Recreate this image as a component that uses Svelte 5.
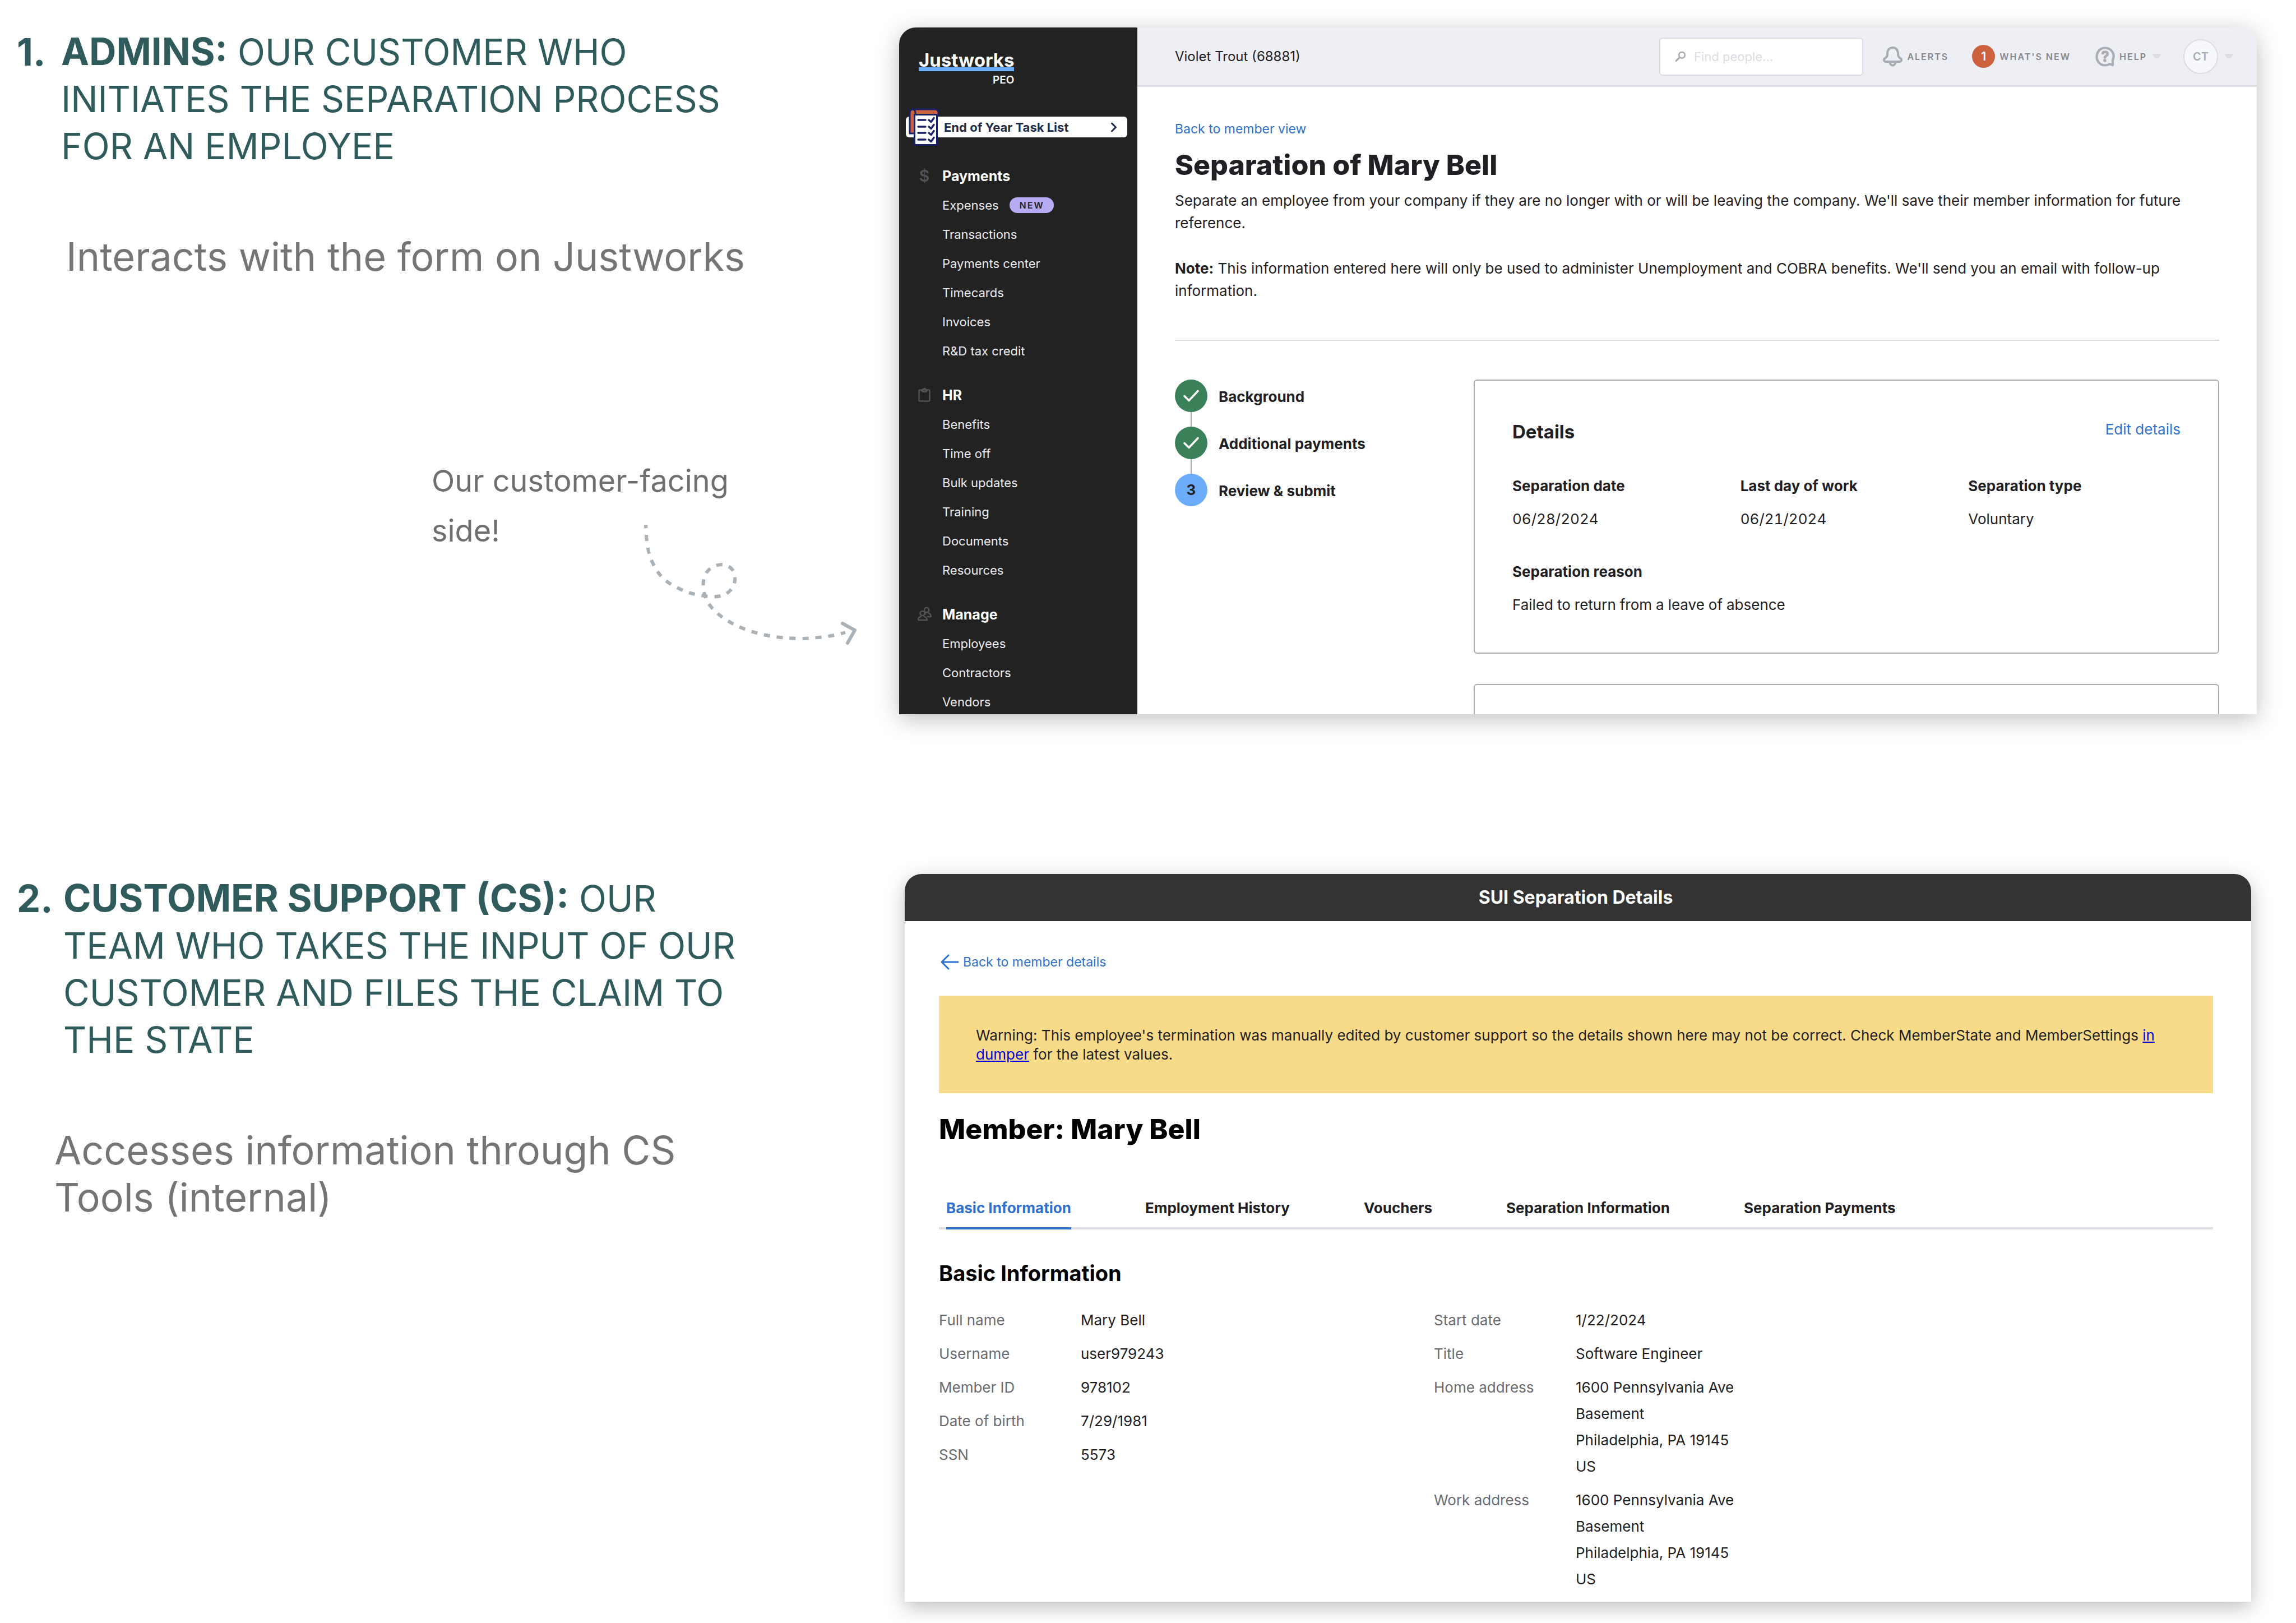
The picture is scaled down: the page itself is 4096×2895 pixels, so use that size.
<script lang="ts">
  type MenuGroup = { title: string; icon: string; items: { label: string; isNew?: boolean }[] };

  const menu: MenuGroup[] = [
    {
      title: 'Payments',
      icon: 'dollar',
      items: [
        { label: 'Expenses', isNew: true },
        { label: 'Transactions' },
        { label: 'Payments center' },
        { label: 'Timecards' },
        { label: 'Invoices' },
        { label: 'R&D tax credit' }
      ]
    },
    {
      title: 'HR',
      icon: 'clipboard',
      items: [
        { label: 'Benefits' },
        { label: 'Time off' },
        { label: 'Bulk updates' },
        { label: 'Training' },
        { label: 'Documents' },
        { label: 'Resources' }
      ]
    },
    {
      title: 'Manage',
      icon: 'people',
      items: [{ label: 'Employees' }, { label: 'Contractors' }, { label: 'Vendors' }]
    }
  ];

  const steps = [
    { label: 'Background', done: true },
    { label: 'Additional payments', done: true },
    { label: 'Review & submit', done: false }
  ];

  const details = [
    { label: 'Separation date', value: '06/28/2024' },
    { label: 'Last day of work', value: '06/21/2024' },
    { label: 'Separation type', value: 'Voluntary' },
    { label: 'Separation reason', value: 'Failed to return from a leave of absence', wide: true }
  ];

  const tabs = [
    'Basic Information',
    'Employment History',
    'Vouchers',
    'Separation Information',
    'Separation Payments'
  ];
  let activeTab = $state(0);

  const address = ['1600 Pennsylvania Ave', 'Basement', 'Philadelphia, PA 19145', 'US'];
  const facts = [
    [
      { label: 'Full name', lines: ['Mary Bell'] },
      { label: 'Username', lines: ['user979243'] },
      { label: 'Member ID', lines: ['978102'] },
      { label: 'Date of birth', lines: ['7/29/1981'] },
      { label: 'SSN', lines: ['5573'] }
    ],
    [
      { label: 'Start date', lines: ['1/22/2024'] },
      { label: 'Title', lines: ['Software Engineer'] },
      { label: 'Home address', lines: address },
      { label: 'Work address', lines: address }
    ]
  ];
</script>

<main class="slide">
  <section class="row">
    <div class="story">
      <h2 class="lead">
        <strong class="num">1.</strong>
        <span><strong>ADMINS:</strong> OUR CUSTOMER WHO INITIATES THE SEPARATION PROCESS FOR AN EMPLOYEE</span>
      </h2>
      <p class="sub first">Interacts with the form on Justworks</p>
      <figure class="callout">
        <figcaption>Our customer-facing side!</figcaption>
        <svg class="swirl" viewBox="1148 932 384 222" fill="none" stroke="#aab1b7" aria-hidden="true">
          <path
            d="M1152 936C1153 968 1156 985 1163 1001C1172 1022 1184 1036 1204 1046C1225 1058 1247 1063 1271 1064C1285 1065 1295 1061 1302 1054C1309 1047 1312 1038 1311 1028C1310 1016 1300 1007 1288 1007C1274 1007 1261 1016 1257 1028C1253 1041 1254 1052 1259 1067C1267 1086 1288 1103 1312 1115C1345 1131 1385 1139 1431 1139C1460 1138 1485 1135 1508 1128"
            stroke-width="6" stroke-dasharray="11 12" stroke-dashoffset="5" />
          <path d="M1503 1112L1525 1124L1512 1147" stroke-width="6" stroke-linecap="round" stroke-linejoin="round" />
        </svg>
      </figure>
    </div>

    <div class="stage top">
      <article class="window portal">
        <aside class="sidebar">
          <div class="logo">
            <span class="brand">Justworks</span>
            <span class="product">PEO</span>
          </div>
          <a class="task" href="#tasks">
            <svg class="task-icon" viewBox="0 0 55 67" aria-hidden="true">
              <path d="M3 45V9C3 4 5 2 8 2H48C56 2 56 14 50 14H14V45Z" fill="#cd603d" stroke="#182066" stroke-width="3" stroke-linejoin="round" />
              <path d="M7 2C13 2 14 8 13 14" fill="none" stroke="#182066" stroke-width="3" />
              <rect x="11.500" y="11.500" width="40" height="54" fill="#fff" stroke="#182066" stroke-width="3" stroke-linejoin="round" />
              <path
                d="M18 21H31M18 33H31M18 44H31M18 56H31M37 21l4 3.500 5-7M37 33l4 3.500 5-7M37 44l4 3.500 5-7M37 56l4 3.500 5-7"
                fill="none" stroke="#182066" stroke-width="3.400" stroke-linecap="round" stroke-linejoin="round" />
            </svg>
            <span>End of Year Task List</span>
            <svg class="task-go" viewBox="0 0 12 18" aria-hidden="true">
              <path d="M2.500 2L9.500 9L2.500 16" fill="none" stroke="#1e2c49" stroke-width="3" stroke-linecap="round" stroke-linejoin="round" />
            </svg>
          </a>
          <nav class="menu" aria-label="Main">
            {#each menu as group}
              <div class="group">
                <h3>
                  <span class="menu-icon">
                    {#if group.icon === 'dollar'}
                      $
                    {:else if group.icon === 'clipboard'}
                      <svg viewBox="0 0 26 26" aria-hidden="true">
                        <rect x="3.500" y="4.500" width="19" height="20" rx="2" />
                        <path d="M8 5.500C9 8.500 17 8.500 18 5.500C16 5.500 16 2 13 2S10 5.500 8 5.500Z" />
                      </svg>
                    {:else}
                      <svg viewBox="0 0 26 26" aria-hidden="true">
                        <circle cx="9.500" cy="12" r="4" />
                        <path d="M2 24C2 20 5 18 7.500 17.500M11.500 17.500C14 18 18 20 18 24H2" />
                        <circle cx="17" cy="6" r="4.200" />
                        <path d="M19.500 11C22 12 25 14 25 18H18M14 11L16 14" />
                      </svg>
                    {/if}
                  </span>
                  {group.title}
                </h3>
                <ul>
                  {#each group.items as item}
                    <li>
                      <a href="#menu">{item.label}</a>
                      {#if item.isNew}<span class="pill">NEW</span>{/if}
                    </li>
                  {/each}
                </ul>
              </div>
            {/each}
          </nav>
        </aside>

        <div class="page">
          <header class="topbar">
            <span class="who">Violet Trout (68881)</span>
            <label class="search">
              <svg viewBox="0 0 22 22" fill="none" stroke="#a9acb3" aria-hidden="true">
                <circle cx="14" cy="8" r="6" stroke-width="3" />
                <path d="M9.500 12.500L2.500 19.500" stroke-width="3.500" stroke-linecap="round" />
              </svg>
              <input type="text" placeholder="Find people..." aria-label="Find people" />
            </label>
            <button class="tool alerts">
              <svg class="bell" viewBox="0 0 35 36" fill="none" stroke="#a9acb3" stroke-width="4" aria-hidden="true">
                <path d="M17.500 2C11 2 8 7 8 12C8 17 7.500 18 4.500 20.500C0.500 22.500 1.500 27 5.500 27H29.500C33.500 27 34.500 22.500 30.500 20.500C27.500 18 27 17 27 12C27 7 24 2 17.500 2Z" />
                <path d="M12.500 28C13 35.500 22 35.500 22.500 28" />
              </svg>
              ALERTS
            </button>
            <button class="tool news"><span class="count">1</span>WHAT'S NEW</button>
            <button class="tool help">
              <svg class="bubble" viewBox="0 0 35 36" fill="none" stroke="#a9acb3" stroke-linejoin="round" stroke-linecap="round" aria-hidden="true">
                <path d="M31 24C36 14 29 2.500 17.500 2.500C8 2.500 2.500 10 2.500 18C2.500 27 9 33.500 17.500 33.500C21 33.500 23 32.500 25.500 31L31 33Z" stroke-width="4.200" />
                <text x="17.500" y="27" text-anchor="middle" fill="#a9acb3" stroke="#a9acb3" stroke-width="1">?</text>
              </svg>
              HELP
              <svg class="caret" viewBox="0 0 15 9" aria-hidden="true"><path d="M0 0H15C14 5 10 8 7.500 9C5 8 1 5 0 0Z" fill="#dcdde2" /></svg>
            </button>
            <button class="account" aria-label="Account CT">
              <span class="avatar">CT</span>
              <svg class="caret" viewBox="0 0 15 9" aria-hidden="true"><path d="M0 0H15C14 5 10 8 7.500 9C5 8 1 5 0 0Z" fill="#dcdde2" /></svg>
            </button>
          </header>

          <div class="body">
            <a class="back" href="#member">Back to member view</a>
            <h1>Separation of Mary Bell</h1>
            <p class="intro">
              Separate an employee from your company if they are no longer with or will be leaving the company.
              We'll save their member information for future reference.
            </p>
            <p class="intro note">
              <strong>Note:</strong> This information entered here will only be used to administer Unemployment and
              COBRA benefits. We'll send you an email with follow-up information.
            </p>
            <hr />
            <div class="work">
              <ol class="steps">
                {#each steps as step, i}
                  <li>
                    <span class="dot" class:done={step.done}>
                      {#if step.done}
                        <svg viewBox="0 0 28 22" aria-hidden="true">
                          <path d="M2 11.500L10 19.500L26 2.500" fill="none" stroke="#fff" stroke-width="3.600" stroke-linecap="round" stroke-linejoin="round" />
                        </svg>
                      {:else}{i + 1}{/if}
                    </span>
                    <span class="step-name">{step.label}</span>
                  </li>
                {/each}
              </ol>
              <div class="cards">
                <section class="card">
                  <div class="card-head">
                    <h2>Details</h2>
                    <a href="#edit">Edit details</a>
                  </div>
                  <dl class="detail-grid">
                    {#each details as d}
                      <div class:wide={d.wide}>
                        <dt>{d.label}</dt>
                        <dd>{d.value}</dd>
                      </div>
                    {/each}
                  </dl>
                </section>
                <section class="card"></section>
              </div>
            </div>
          </div>
        </div>
      </article>
    </div>
  </section>

  <section class="row">
    <div class="story support">
      <h2 class="lead">
        <strong class="num">2.</strong>
        <span><strong>CUSTOMER SUPPORT (CS):</strong> OUR TEAM WHO TAKES THE INPUT OF OUR CUSTOMER AND FILES THE CLAIM TO THE STATE</span>
      </h2>
      <p class="sub second">Accesses information through CS Tools (internal)</p>
    </div>

    <div class="stage bottom">
      <article class="window tools">
        <header class="titlebar">SUI Separation Details</header>
        <div class="tool-body">
          <a class="back" href="#details">
            <svg viewBox="0 0 34 28" aria-hidden="true">
              <path d="M15 2L3 14L15 26M3 14H32" fill="none" stroke="#2f70d0" stroke-width="3" stroke-linecap="round" stroke-linejoin="round" />
            </svg>
            Back to member details
          </a>
          <p class="warning">
            Warning: This employee's termination was manually edited by customer support so the details shown here may
            not be correct. Check MemberState and MemberSettings <a href="#dumper">in dumper</a> for the latest values.
          </p>
          <h1>Member: Mary Bell</h1>
          <div class="tabs" role="tablist">
            {#each tabs as tab, i}
              <button role="tab" aria-selected={activeTab === i} class:active={activeTab === i} onclick={() => (activeTab = i)}>{tab}</button>
            {/each}
          </div>
          <h2>Basic Information</h2>
          <div class="facts">
            {#each facts as column}
              <dl>
                {#each column as fact}
                  <dt>{fact.label}</dt>
                  <dd>{#each fact.lines as line}<span>{line}</span>{/each}</dd>
                {/each}
              </dl>
            {/each}
          </div>
        </div>
      </article>
    </div>
  </section>
</main>

<style>
  :global(body) {
    margin: 0;
    background: #fff;
  }
  .slide {
    font-family: Inter, 'Liberation Sans', sans-serif;
    font-size: 26px;
    line-height: 40px;
    color: #1f2023;
    padding-bottom: 38px;
    display: grid;
    gap: 285px;
  }
  h1, h2, h3, p, ul, ol, dl, dd, figure {
    margin: 0;
    padding: 0;
  }
  ul, ol {
    list-style: none;
  }
  a {
    color: #2f70d0;
    text-decoration: none;
  }
  button {
    font: inherit;
    color: inherit;
    background: none;
    border: 0;
    padding: 0;
    cursor: pointer;
  }
  .row {
    display: grid;
    grid-template-columns: minmax(0, 1604fr) minmax(0, 2492fr);
    align-items: start;
  }

  /* Left-hand captions */
  .story {
    padding-top: 51px;
  }
  .support {
    padding-top: 2px;
  }
  .lead {
    display: grid;
    grid-template-columns: 79px minmax(0, 1230px);
    padding-left: 30px;
    font-size: 64px;
    font-weight: 400;
    line-height: 84px;
    color: #2f5b5c;
  }
  .support .lead {
    grid-template-columns: 83px minmax(0, 1230px);
  }
  .lead strong {
    font-size: 67px;
    line-height: 1;
  }
  .lead .num {
    line-height: 84px;
  }
  .sub {
    margin-top: 113px;
    max-width: 1230px;
    font-size: 70px;
    line-height: 84px;
    color: #757575;
  }
  .first {
    padding-left: 118px;
  }
  .second {
    padding-left: 97px;
  }
  .callout {
    display: grid;
    margin-top: 313px;
    font-size: 54px;
    line-height: 89px;
    color: #6f6f6f;
  }
  .callout figcaption {
    grid-area: 1 / 1;
    width: 580px;
    margin-left: 770px;
  }
  .swirl {
    grid-area: 1 / 1;
    width: 384px;
    height: 222px;
    margin: 119px 0 0 1148px;
  }

  /* Framed windows */
  .stage {
    padding-right: 70px;
  }
  .top {
    padding-top: 49px;
  }
  .bottom {
    padding: 0 80px 0 10px;
  }
  .portal {
    display: grid;
    grid-template-columns: 425px minmax(0, 1fr);
    aspect-ratio: 2422 / 1225;
    overflow: hidden;
    background: #fff;
    border-radius: 30px 30px 0 0;
    box-shadow: 0 8px 42px rgba(0, 0, 0, 0.26);
  }
  .sidebar {
    min-height: 0;
    background: #222;
    color: #fff;
  }
  .logo {
    display: grid;
    width: 167px;
    margin: 38px 0 0 35px;
    text-align: right;
  }
  .brand {
    font-size: 33px;
    font-weight: 700;
    line-height: 40px;
    text-align: left;
    background: linear-gradient(#6badfb, #6badfb) 0 33px / 100% 7px no-repeat;
  }
  .product {
    margin-top: 4px;
    font-size: 19px;
    font-weight: 600;
    line-height: 24px;
  }
  .task {
    position: relative;
    display: flex;
    align-items: center;
    justify-content: space-between;
    height: 37px;
    margin: 53px 18px 0 12px;
    padding: 0 18px 0 68px;
    border-radius: 6px;
    background: #fff;
    color: #1e2c49;
    font-size: 22px;
    font-weight: 700;
  }
  .task-icon {
    position: absolute;
    left: 4px;
    top: -15px;
    width: 55px;
    height: 67px;
  }
  .task-go {
    width: 12px;
    height: 18px;
  }
  .menu {
    display: grid;
    gap: 27px;
    margin-top: 43px;
  }
  .menu h3 {
    display: grid;
    grid-template-columns: 45px 1fr;
    padding-left: 32px;
    font-size: 25px;
    font-weight: 700;
    line-height: 52px;
  }
  .menu-icon {
    width: 26px;
    font-size: 29px;
    font-weight: 600;
    text-align: center;
    color: #515357;
  }
  .menu-icon svg {
    display: block;
    width: 26px;
    height: 26px;
    margin-top: 12px;
    fill: none;
    stroke: #515357;
    stroke-width: 2.5;
    stroke-linejoin: round;
  }
  .menu li {
    display: flex;
    align-items: center;
    gap: 19px;
    height: 52px;
    padding-left: 77px;
    font-size: 22px;
  }
  .menu a {
    color: #ececf0;
  }
  .pill {
    padding: 0 17px 0 18px;
    border-radius: 14px;
    background: #b7abf3;
    color: #222;
    font-size: 16px;
    font-weight: 600;
    letter-spacing: 2px;
    line-height: 28px;
  }

  .topbar {
    display: flex;
    align-items: center;
    height: 103px;
    padding: 0 42px 0 67px;
    background: #eeeff4;
    border-bottom: 3px solid #dcdde2;
  }
  .who {
    margin-right: auto;
    font-size: 24px;
  }
  .search {
    box-sizing: border-box;
    display: flex;
    align-items: center;
    gap: 14px;
    width: 364px;
    height: 68px;
    padding: 0 26px;
    background: #fff;
    border: 2px solid #dcdde2;
    border-radius: 6px;
  }
  .search svg {
    width: 22px;
    height: 22px;
  }
  .search input {
    width: 100%;
    min-width: 0;
    padding: 0;
    border: 0;
    outline: 0;
    background: none;
    font: inherit;
    font-size: 22px;
  }
  .search input::placeholder {
    color: #dcdde2;
    opacity: 1;
  }
  .tool {
    display: flex;
    align-items: center;
    gap: 8px;
    font-size: 16px;
    font-weight: 600;
    letter-spacing: 2px;
    color: #85878d;
  }
  .alerts {
    margin-left: 35px;
  }
  .news {
    margin-left: 42px;
  }
  .help {
    margin-left: 44px;
  }
  .bell, .bubble {
    width: 35px;
    height: 36px;
  }
  .bubble text {
    font-size: 26px;
    font-weight: 700;
    letter-spacing: 0;
  }
  .count {
    width: 41px;
    border-radius: 50%;
    background: #cd603d;
    color: #fff;
    font-size: 21px;
    letter-spacing: 0;
    line-height: 41px;
  }
  .caret {
    width: 15px;
    height: 9px;
    margin-left: 2px;
  }
  .account {
    display: flex;
    align-items: center;
    gap: 10px;
    margin-left: 40px;
  }
  .avatar {
    width: 58px;
    border: 2px solid #dcdde2;
    border-radius: 50%;
    background: #f7f8fc;
    color: #a9acb3;
    font-size: 20px;
    font-weight: 600;
    line-height: 58px;
  }

  .body {
    padding: 61px 67px 0;
  }
  .back {
    display: flex;
    align-items: center;
    font-size: 23px;
    line-height: 28px;
  }
  h1 {
    font-size: 50px;
    font-weight: 800;
    line-height: 60px;
  }
  .body h1 {
    margin-top: 20px;
  }
  .intro {
    margin-top: 14px;
  }
  .note {
    margin-top: 41px;
  }
  hr {
    height: 2px;
    margin: 67px 0 69px;
    border: 0;
    background: #dcdde0;
  }
  .work {
    display: grid;
    grid-template-columns: 533px minmax(0, 1fr);
  }
  .steps {
    display: grid;
    gap: 26px;
    align-content: start;
  }
  .steps li {
    position: relative;
    display: flex;
    align-items: center;
    gap: 20px;
    font-weight: 700;
  }
  .steps li + li::before {
    content: '';
    position: absolute;
    left: 28px;
    bottom: 58px;
    width: 2px;
    height: 26px;
    background: #a9acb3;
  }
  .dot {
    display: grid;
    place-items: center;
    width: 58px;
    height: 58px;
    border-radius: 50%;
    background: #6badfb;
  }
  .dot.done {
    background: #3a8058;
  }
  .dot svg {
    width: 28px;
    height: 28px;
  }
  .step-name {
    padding-top: 4px;
  }
  .cards {
    display: grid;
    gap: 54px;
  }
  .card {
    min-height: 200px;
    padding: 67px 67px 65px;
    border: 2px solid #a9acb3;
    border-radius: 6px;
  }
  .card-head {
    display: flex;
    justify-content: space-between;
    align-items: flex-start;
  }
  .card-head h2 {
    margin-top: 4px;
    font-size: 33px;
    font-weight: 700;
  }
  .detail-grid {
    display: grid;
    grid-template-columns: repeat(3, minmax(0, 1fr));
    gap: 54px 28px;
    margin-top: 57px;
  }
  .wide {
    grid-column: 1 / -1;
  }
  .detail-grid dt {
    font-weight: 700;
  }
  .detail-grid dd {
    margin-top: 19px;
    font-variant-numeric: tabular-nums;
  }

  /* Internal tools window */
  .tools {
    overflow: hidden;
    background: #fff;
    border-radius: 30px 30px 0 0;
    box-shadow: 0 10px 36px rgba(0, 0, 0, 0.26);
  }
  .titlebar {
    padding-right: 8px;
    background: #333;
    color: #fff;
    font-size: 32px;
    font-weight: 700;
    line-height: 84px;
    text-align: center;
  }
  .tool-body {
    padding: 59px 68px 17px 61px;
  }
  .tool-body .back {
    gap: 7px;
    padding-left: 2px;
  }
  .back svg {
    width: 34px;
    height: 28px;
  }
  .warning {
    margin-top: 46px;
    padding: 54px 66px 52px;
    background: #f8db88;
    line-height: 34px;
  }
  .warning a {
    color: #0000e0;
    text-decoration: underline;
  }
  .tool-body h1 {
    margin-top: 34px;
    color: #000;
  }
  .tabs {
    display: flex;
    gap: 132px;
    margin-top: 91px;
    padding-left: 13px;
    border-bottom: 4px solid #dcdde2;
  }
  .tabs button {
    margin-bottom: -4px;
    padding-bottom: 14px;
    border-bottom: 4px solid transparent;
    font-weight: 700;
  }
  .tabs .active {
    color: #2f70d0;
    border-color: #2f70d0;
  }
  .tool-body h2 {
    margin-top: 54px;
    font-size: 38px;
    font-weight: 700;
    line-height: 48px;
    color: #000;
  }
  .facts {
    display: grid;
    grid-template-columns: minmax(0, 883fr) minmax(0, 1390fr);
    margin-top: 36px;
  }
  .facts dl {
    display: grid;
    grid-template-columns: 253px 1fr;
    gap: 13px 0;
    align-content: start;
    line-height: 47px;
  }
  .facts dt {
    color: #6a6b70;
  }
  .facts dd span {
    display: block;
  }
</style>
